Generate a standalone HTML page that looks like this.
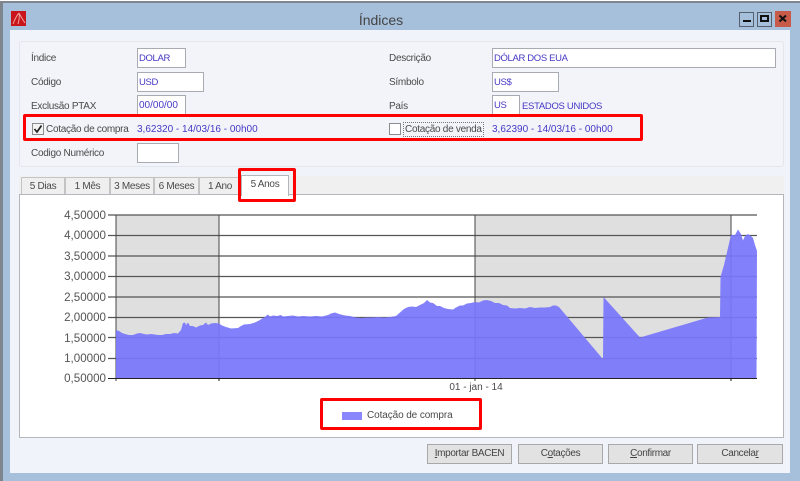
<!DOCTYPE html>
<html><head><meta charset="utf-8"><style>
html,body{margin:0;padding:0;background:#fff}
#w{position:relative;width:800px;height:481px;overflow:hidden;background:#fff;font-family:"Liberation Sans",sans-serif;font-size:10px;color:#444;filter:blur(.35px)}
#w div{position:absolute;box-sizing:border-box;white-space:nowrap}
.l{line-height:14px;height:14px;color:#4a4a4a;letter-spacing:-.28px}
.v{line-height:14px;height:14px;color:#4638c4}
.i{background:#fff;border:1px solid #a9abb2;color:#4638c4;line-height:19px;padding-left:1px;font-size:9.5px;letter-spacing:-.35px}
.t{background:#efeff0;border:1px solid #c4c4c6;border-bottom:0;text-align:center;line-height:17px;color:#4a4a4a;height:18px;top:177px;letter-spacing:-.3px}
.r{border:3px solid #f00;border-radius:2px}
.b{background:#e2e2e2;border:1px solid #a8a8a8;text-align:center;line-height:18px;height:20px;top:444px;color:#444;font-size:10px;letter-spacing:-.35px}
.y{left:59px;width:47px;text-align:right;font-size:11.6px;line-height:14px;color:#555}
</style></head><body><div id="w">
<div style="left:0;top:1px;width:800px;height:480px;background:#a6c0dc;border-top:2px solid #7f858c;border-left:3px solid #7f858c"></div>
<div style="left:10px;top:30px;width:780px;height:443px;background:#f1f3fa"></div>

<div style="left:11px;top:11px;width:15px;height:15px;background:#c8141a"></div>
<svg style="position:absolute;left:11px;top:11px" width="15" height="15" viewBox="0 0 15 15"><path d="M2 13C4 8 6 4 8 2M7 13C8 9 9 6 8 2M8 2C10 6 12 9 14 12" fill="none" stroke="#f0a0a0" stroke-width="1"/></svg>
<div style="left:340px;top:12px;width:82px;text-align:center;font-size:14px;line-height:16px;color:#444">Índices</div>
<div style="left:739px;top:12px;width:15px;height:15px;background:#a6c0dc;border:1px solid #56606c"></div>
<div style="left:743px;top:20px;width:8px;height:2px;background:#111"></div>
<div style="left:757px;top:12px;width:15px;height:15px;background:#a6c0dc;border:1px solid #56606c"></div>
<div style="left:760px;top:15px;width:9px;height:7px;border:2px solid #111"></div>
<div style="left:775px;top:11px;width:16px;height:16px;background:#c85a4a"></div>
<svg style="position:absolute;left:775px;top:11px" width="16" height="16"><path d="M4.5 4.5L11 10.5M11 4.5L4.5 10.5" stroke="#111" stroke-width="2"/></svg>

<div style="left:19px;top:41px;width:765px;height:126px;background:#f2f4fa;border:1px solid #e4e6ee;border-radius:3px"></div>

<div class="l" style="left:31px;top:52px">Índice</div>
<div class="i" style="left:137px;top:48px;width:49px;height:20px">DOLAR</div>
<div class="l" style="left:31px;top:76px">Código</div>
<div class="i" style="left:137px;top:72px;width:67px;height:20px">USD</div>
<div class="l" style="left:31px;top:100px">Exclusão PTAX</div>
<div class="i" style="left:137px;top:95px;width:49px;height:20px;font-size:10px;letter-spacing:0">00/00/00</div>
<div class="l" style="left:31px;top:147px">Codigo Numérico</div>
<div class="i" style="left:137px;top:143px;width:42px;height:20px"></div>

<div class="l" style="left:389px;top:52px">Descrição</div>
<div class="i" style="left:492px;top:48px;width:284px;height:20px">DÓLAR DOS EUA</div>
<div class="l" style="left:389px;top:76px">Símbolo</div>
<div class="i" style="left:492px;top:72px;width:67px;height:20px">US$</div>
<div class="l" style="left:389px;top:100px">País</div>
<div class="i" style="left:492px;top:95px;width:28px;height:20px">US</div>
<div class="v" style="left:522px;top:100px;font-size:9.5px;letter-spacing:-.3px">ESTADOS UNIDOS</div>

<div class="r" style="left:23px;top:114px;width:620px;height:27px"></div>
<div style="left:32px;top:123px;width:12px;height:12px;background:#f4f4f4;border:1px solid #8c8c8c"></div>
<svg style="position:absolute;left:32px;top:123px" width="12" height="12"><path d="M2.500 6L5 9L9.500 2.500" fill="none" stroke="#222" stroke-width="1.700"/></svg>
<div class="l" style="left:46px;top:123px">Cotação de compra</div>
<div class="v" style="left:137px;top:123px">3,62320 - 14/03/16 - 00h00</div>
<div style="left:389px;top:123px;width:12px;height:12px;background:#fff;border:1px solid #8c8c8c"></div>
<div class="l" style="left:403px;top:122px;border:1px dotted #777;height:15px;line-height:14px;padding:0 1px">Cotação de venda</div>
<div class="v" style="left:492px;top:123px">3,62390 - 14/03/16 - 00h00</div>

<div style="left:19px;top:176px;width:765px;height:19px;background:#f0f0f0"></div>
<div class="t" style="left:21px;width:44px">5 Dias</div>
<div class="t" style="left:65px;width:45px">1 Mês</div>
<div class="t" style="left:110px;width:44px">3 Meses</div>
<div class="t" style="left:154px;width:45px">6 Meses</div>
<div class="t" style="left:199px;width:42px">1 Ano</div>
<div style="left:19px;top:194px;width:765px;height:244px;background:#fff;border:1px solid #b4b6bc"></div>
<div style="left:241px;top:175px;width:48px;height:21px;background:#fff;border:1px solid #b4b6bc;border-bottom:0;text-align:center;line-height:18px;color:#4a4a4a;letter-spacing:-.3px">5 Anos</div>
<div class="r" style="left:238px;top:168px;width:58px;height:34px"></div>

<svg style="position:absolute;left:0;top:0" width="800" height="481">
<rect x="116" y="215" width="103" height="163" fill="#dfdfdf"/>
<rect x="475" y="215" width="256" height="163" fill="#dfdfdf"/>
<g stroke="#555" stroke-width="1.2">
<path d="M108 215H757M108 235.500H757M108 256H757M108 276.500H757M108 297H757M108 317.500H757M108 337.500H757M108 358.500H757"/>
</g>
<path d="M116 215V381M219 215V381M475 215V381M731 215V381" stroke="#444" stroke-width="1"/>
<path fill="#7a76fb" fill-opacity=".93" d="M116 330L119 331L122 333L125 334L129 335L133 335L137 333.500L140 333L144 334L147 334.500L151 334L155 334.500L158 335L162 335L166 334L170 334L174 333L178 333.500L181 330L183 323L185 322.500L186 325L188 322.500L190 326L193 326L196 327.500L200 325.500L203 325L206 322.500L208 325L211 323.500L215 323L219 323.500L222 325.500L226 327L231 328.500L238 328L241 326L244 324.500L250 324L255 322.500L259 320.500L264 317.500L268 314.500L270 316.500L273 315.500L277 316L281 315L283 316.500L288 316L293 315.500L298 316.500L303 316L310 316.500L316 316L322 316.500L328 315L331 313.500L335 312.500L339 314L345 315.500L350 316L356 317.500L362 318L366 317.500L372 317.500L378 317L384 317.500L390 317L396 316L400 312.500L404 309L408 307L412 306.500L416 307L420 305L424 303L427 300L430 302.500L433 303L437 306L440 306L444 308L448 309L453 309.500L456 307.500L460 305.500L463 305.500L467 303.500L471 303L475 302L479 302.500L483 300.500L487 300L491 301L495 303L499 303L503 305L507 305.500L510 308L515 308.500L520 308L525 308.500L530 307L535 308L540 307.500L545 307.500L550 307L553 305.500L556 305.500L559 307L602 358L603 358L603.500 297L640 337.500L708 317.500L720 317L720.500 277L724 265L731 235L735 235L738 229.500L741 234L743 240.500L745 236L748 234L751 236L753 238L755 245L757 251L756.500 378L116 378Z"/>
<path d="M108 378.500H757M219 378V381M731 378V381" stroke="#222" stroke-width="1.100"/>
</svg>
<div class="y" style="top:209px">4,50000</div>
<div class="y" style="top:229px">4,00000</div>
<div class="y" style="top:250px">3,50000</div>
<div class="y" style="top:270px">3,00000</div>
<div class="y" style="top:291px">2,50000</div>
<div class="y" style="top:311px">2,00000</div>
<div class="y" style="top:332px">1,50000</div>
<div class="y" style="top:352px">1,00000</div>
<div class="y" style="top:372px">0,50000</div>
<div style="left:436px;top:381px;width:80px;text-align:center;font-size:10px;line-height:14px;color:#4a4a4a">01 - jan - 14</div>

<div class="r" style="left:320px;top:398px;width:162px;height:32px"></div>
<div style="left:342px;top:412px;width:20px;height:8px;background:#8a86fb"></div>
<div style="left:367px;top:409px;font-size:10px;letter-spacing:-.1px;line-height:14px;color:#4a4a4a">Cotação de compra</div>

<div class="b" style="left:427px;width:85px"><u>I</u>mportar BACEN</div>
<div class="b" style="left:518px;width:85px">C<u>o</u>tações</div>
<div class="b" style="left:608px;width:85px"><u>C</u>onfirmar</div>
<div class="b" style="left:697px;width:86px">Cancela<u>r</u></div>
</div></body></html>
